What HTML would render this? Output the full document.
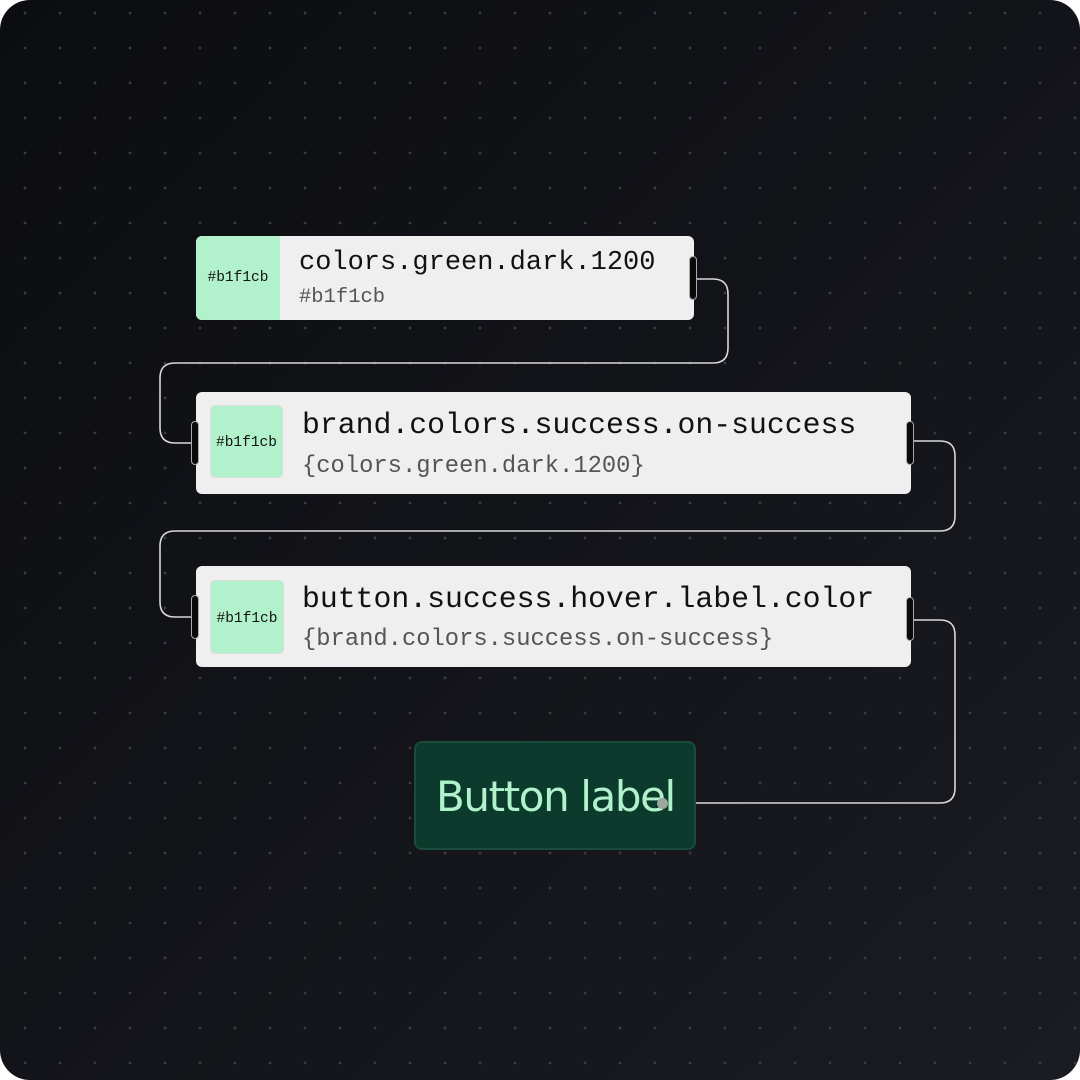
<!DOCTYPE html><html><head><style>
html,body{margin:0;padding:0;background:#fff;}
.bg{position:absolute;left:0;top:0;width:1080px;height:1080px;border-radius:30px;overflow:hidden;
background:linear-gradient(135deg,#0c0d10 0%,#131419 50%,#1a1c22 100%);}
.dots{position:absolute;inset:0;background-image:radial-gradient(circle,#3a3c42 1.2px,transparent 1.6px);background-size:35px 35px;background-position:7.5px 30.5px;}
.card{position:absolute;background:#efefef;border-radius:6px;font-family:"Liberation Mono",monospace;}
.sw{position:absolute;background:#b1f1cb;font-family:"Liberation Mono",monospace;font-size:14.5px;color:#111;display:flex;align-items:center;justify-content:center;}
.t{position:absolute;white-space:nowrap;color:#111;}
.s{position:absolute;white-space:nowrap;color:#555;}
.h{position:absolute;width:6px;height:42px;background:#0a0a0a;border:1.5px solid #aaa;border-radius:4px;}
svg{position:absolute;left:0;top:0;}
</style></head><body>
<div class="bg"><div class="dots"></div>
<svg width="1080" height="1080" fill="none" stroke="#d8d8d8" stroke-width="1.6">
<path d="M694 279 H713 Q728 279 728 294 V348 Q728 363 713 363 H175 Q160 363 160 378 V428 Q160 443 175 443 H196"/>
<path d="M911 441 H940 Q955 441 955 456 V516 Q955 531 940 531 H175 Q160 531 160 546 V602 Q160 617 175 617 H196"/>
<path d="M911 620 H940 Q955 620 955 635 V788 Q955 803 940 803 H663"/>
</svg>
<div class="card" style="left:196px;top:236px;width:498px;height:84px;overflow:hidden">
<div class="sw" style="left:0;top:0;width:84px;height:84px;">#b1f1cb</div>
<div class="t" style="left:103px;top:12px;font-size:27px;">colors.green.dark.1200</div>
<div class="s" style="left:103px;top:50px;font-size:20.5px;">#b1f1cb</div>
</div>
<div class="card" style="left:196px;top:392px;width:715px;height:102px;">
<div class="sw" style="left:14px;top:13px;width:73px;height:73px;border:1.5px solid #ddd;border-radius:5px;box-sizing:border-box;padding-top:3px;">#b1f1cb</div>
<div class="t" style="left:106px;top:16px;font-size:29.8px;">brand.colors.success.on-success</div>
<div class="s" style="left:106px;top:61px;font-size:23.8px;">{colors.green.dark.1200}</div>
</div>
<div class="card" style="left:196px;top:566px;width:715px;height:101px;">
<div class="sw" style="left:14px;top:14px;width:74px;height:74px;border:1.5px solid #ddd;border-radius:5px;box-sizing:border-box;padding-top:3px;">#b1f1cb</div>
<div class="t" style="left:106px;top:16px;font-size:29.8px;">button.success.hover.label.color</div>
<div class="s" style="left:106px;top:60px;font-size:23.8px;">{brand.colors.success.on-success}</div>
</div>
<div class="h" style="left:689px;top:256px;"></div>
<div class="h" style="left:191px;top:421px;"></div>
<div class="h" style="left:906px;top:421px;"></div>
<div class="h" style="left:191px;top:595px;"></div>
<div class="h" style="left:906px;top:597px;"></div>
<div style="position:absolute;left:414px;top:741px;width:282px;height:109px;box-sizing:border-box;background:#0c3a2c;border:2px solid #1a4b3b;border-radius:8px;"></div>
<div style="position:absolute;left:436px;top:772px;font-family:'DejaVu Sans','Liberation Sans',sans-serif;font-size:42px;color:#b1f1cb;white-space:nowrap;letter-spacing:-1.4px;">Button label</div>
<div style="position:absolute;left:657px;top:798px;width:11px;height:11px;border-radius:50%;background:#9aa8a0;"></div>
</div>
</body></html>
